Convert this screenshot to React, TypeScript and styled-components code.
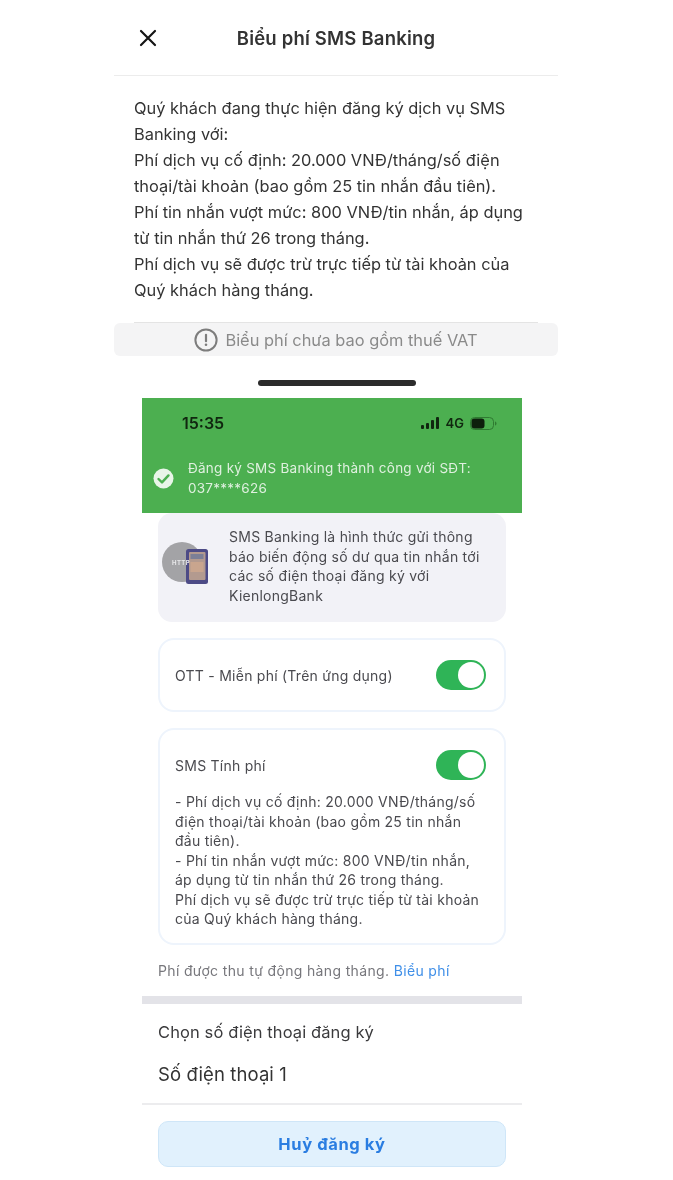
import React from "react";
import styled, { createGlobalStyle } from "styled-components";

const Global = createGlobalStyle`
  html, body { margin: 0; padding: 0; background: #fff; }
  body { font-family: Inter, "Noto Sans", "Liberation Sans", sans-serif; }
  * { box-sizing: border-box; }
`;

const Page = styled.div`
  width: 673px;
  height: 1180px;
  overflow: hidden;
  background: #fff;
  display: flex;
  flex-direction: column;
  align-items: center;
`;

const Sheet = styled.section`
  width: 444px;
  margin-left: -1px;
  filter: blur(0.3px);
`;

const SheetHeader = styled.header`
  height: 76px;
  border-bottom: 1px solid #ececec;
  display: grid;
  grid-template-columns: 66px 1fr 66px;
  align-items: center;
`;

const CloseButton = styled.span`
  display: flex;
  justify-content: flex-end;
  padding-right: 22px;
  color: #151515;
`;

const SheetTitle = styled.h1`
  margin: 0;
  text-align: center;
  font-size: 18.5px;
  letter-spacing: 0.2px;
  font-weight: 600;
  color: #333;
  white-space: nowrap;
`;

const SheetBody = styled.p`
  margin: 0;
  padding: 19px 20px 0;
  font-size: 16.4px;
  line-height: 26px;
  color: #333;
  white-space: pre-line;
`;

const Rule = styled.div`
  height: 1px;
  margin: 19px 20px 0;
  background: #e4e4e4;
`;

const Notice = styled.div`
  height: 33px;
  border-radius: 6px;
  background: #f4f4f5;
  color: #8a8a8a;
  font-size: 16.4px;
  display: flex;
  align-items: center;
  justify-content: center;
  gap: 7px;
`;

const HomeBar = styled.div`
  width: 158px;
  height: 6px;
  flex: none;
  margin-top: 24px;
  border-radius: 3px;
  background: #2b2b2b;
`;

const Phone = styled.section`
  width: 380px;
  margin-top: 12px;
  margin-right: 9px;
  flex: none;
  filter: blur(0.45px);
`;

const Banner = styled.div`
  height: 115px;
  background: #4caf50;
  padding: 15px 25px 0 11px;
`;

const StatusBar = styled.div`
  display: flex;
  align-items: center;
  justify-content: space-between;
  padding: 0 0 0 29px;
  height: 20px;
`;

const Clock = styled.span`
  font-size: 16px;
  font-weight: 600;
  color: #10260f;
`;

const StatusIcons = styled.span`
  display: flex;
  align-items: center;
  gap: 6px;
  color: #10260f;
  font-size: 13px;
  font-weight: 600;
`;

const Toast = styled.div`
  display: flex;
  align-items: center;
  gap: 14px;
  margin-top: 26px;
  color: #dff0df;
  font-size: 13.5px;
  letter-spacing: 0.25px;
  line-height: 19.5px;
`;

const Content = styled.div`
  padding: 0 16px;
`;

const InfoCard = styled.div`
  height: 109px;
  border-radius: 14px;
  background: #f2f2f7;
  padding: 14px 10px 0 4px;
  display: flex;
  gap: 20px;
  color: #4a4a4f;
  font-size: 14px;
  letter-spacing: 0.25px;
  line-height: 19.5px;
  white-space: nowrap;
`;

const InfoIcon = styled.span`
  flex: none;
  margin-top: 15px;
  display: block;
`;

const OptionCard = styled.div`
  margin-top: 16px;
  border: 2px solid #eef4fc;
  border-radius: 16px;
  padding: 0 18px 0 15px;
  background: #fff;
`;

const OptionRow = styled.div`
  height: 70px;
  display: flex;
  align-items: center;
  justify-content: space-between;
  color: #4a4a4f;
  font-size: 14px;
  letter-spacing: 0.25px;
`;

const Switch = styled.span`
  width: 50px;
  height: 30px;
  border-radius: 15px;
  padding: 2px;
  background: #2fb457;
  display: flex;
  justify-content: flex-end;

  &::after {
    content: "";
    width: 26px;
    height: 26px;
    border-radius: 50%;
    background: #fff;
  }
`;

const OptionText = styled.p`
  margin: -8px 0 0;
  padding-bottom: 14px;
  color: #4a4a4f;
  font-size: 14px;
  letter-spacing: 0.25px;
  line-height: 19.5px;
  white-space: pre-line;
`;

const FeeNote = styled.p`
  margin: 17px 0 0;
  color: #77777c;
  font-size: 14px;
  letter-spacing: 0.35px;
  line-height: 18px;
`;

const FeeLink = styled.span`
  color: #3f8fe8;
`;

const ThickDivider = styled.div`
  height: 8px;
  margin-top: 16px;
  background: #e3e3e8;
`;

const PhoneSection = styled.div`
  padding: 18px 16px 0;
`;

const FieldLabel = styled.div`
  color: #3a3a3c;
  font-size: 16.5px;
  letter-spacing: 0.1px;
  line-height: 20px;
`;

const FieldValue = styled.div`
  margin-top: 22px;
  color: #333;
  font-size: 18.5px;
  letter-spacing: 0.1px;
  line-height: 20px;
`;

const ThinDivider = styled.div`
  height: 2px;
  margin-top: 19px;
  background: #ececee;
`;

const Actions = styled.div`
  padding: 16px 16px 0;
`;

const CancelButton = styled.div`
  height: 46px;
  border: 1px solid #cfe6f8;
  border-radius: 10px;
  background: #e1f1fd;
  color: #2a7de1;
  font-size: 16.5px;
  font-weight: 700;
  letter-spacing: 0.6px;
  display: flex;
  align-items: center;
  justify-content: center;
`;

const CloseIcon = () => (
  <svg width="20" height="20" viewBox="0 0 20 20" fill="none" stroke="currentColor" strokeWidth="2.2" strokeLinecap="round">
    <path d="M3 3l14 14M17 3L3 17" />
  </svg>
);

const AlertIcon = () => (
  <svg width="24" height="24" viewBox="0 0 24 24" fill="none">
    <circle cx="12" cy="12" r="10.6" stroke="#7d7d7d" strokeWidth="2" />
    <path d="M12 6.8v6.4" stroke="#7d7d7d" strokeWidth="2.2" strokeLinecap="round" />
    <circle cx="12" cy="16.8" r="1.3" fill="#7d7d7d" />
  </svg>
);

const SignalIcons = () => (
  <svg width="19" height="12" viewBox="0 0 19 12" fill="#10260f">
    <rect x="0" y="8" width="3" height="4" rx="1" />
    <rect x="5" y="6" width="3" height="6" rx="1" />
    <rect x="10" y="3" width="3" height="9" rx="1" />
    <rect x="15" y="0" width="3" height="12" rx="1" />
  </svg>
);

const BatteryIcon = () => (
  <svg width="27" height="13" viewBox="0 0 27 13" fill="none">
    <rect x="0.5" y="0.5" width="23" height="12" rx="4" stroke="#2f7a31" />
    <rect x="1.5" y="1.5" width="13" height="10" rx="3" fill="#0d1f0c" />
    <path d="M25 4.5c1 .4 1.5 1.2 1.5 2s-.5 1.6-1.5 2z" fill="#2f7a31" />
  </svg>
);

const CheckIcon = () => (
  <svg width="21" height="21" viewBox="0 0 21 21" style={{ flex: "none" }}>
    <circle cx="10.5" cy="10.5" r="10" fill="#e8f5e8" />
    <path d="M5.5 11l3.5 3.4 6.5-7" fill="none" stroke="#4caf50" strokeWidth="2.4" strokeLinecap="round" strokeLinejoin="round" />
  </svg>
);

const HttpPhoneIcon = () => (
  <svg width="47" height="43" viewBox="0 0 47 43">
    <circle cx="20" cy="20" r="20" fill="#a3a3a6" />
    <rect x="24" y="7" width="22" height="35" rx="2.5" fill="#4d4b86" />
    <rect x="27" y="10" width="16.5" height="28" rx="1" fill="#b39a8f" />
    <rect x="28.5" y="12" width="13" height="5" fill="#7c7f96" />
    <rect x="28.5" y="20" width="13" height="10" fill="#c9a58e" />
    <text x="10" y="23" fontSize="6" fontWeight="700" letterSpacing="0.4" fill="#e8e8ea" fontFamily="Inter, sans-serif">HTTP</text>
  </svg>
);

export default function App() {
  return (
    <Page>
      <Global />
      <Sheet>
        <SheetHeader>
          <CloseButton><CloseIcon /></CloseButton>
          <SheetTitle>Biểu phí SMS Banking</SheetTitle>
          <span />
        </SheetHeader>
        <SheetBody>{`Quý khách đang thực hiện đăng ký dịch vụ SMS
Banking với:
Phí dịch vụ cố định: 20.000 VNĐ/tháng/số điện
thoại/tài khoản (bao gồm 25 tin nhắn đầu tiên).
Phí tin nhắn vượt mức: 800 VNĐ/tin nhắn, áp dụng
từ tin nhắn thứ 26 trong tháng.
Phí dịch vụ sẽ được trừ trực tiếp từ tài khoản của
Quý khách hàng tháng.`}</SheetBody>
        <Rule />
        <Notice><AlertIcon />Biểu phí chưa bao gồm thuế VAT</Notice>
      </Sheet>
      <HomeBar />
      <Phone>
        <Banner>
          <StatusBar>
            <Clock>15:35</Clock>
            <StatusIcons><SignalIcons />4G<BatteryIcon /></StatusIcons>
          </StatusBar>
          <Toast>
            <CheckIcon />
            <span>Đăng ký SMS Banking thành công với SĐT:<br />037****626</span>
          </Toast>
        </Banner>
        <Content>
          <InfoCard>
            <InfoIcon><HttpPhoneIcon /></InfoIcon>
            <span>SMS Banking là hình thức gửi thông<br />báo biến động số dư qua tin nhắn tới<br />các số điện thoại đăng ký với<br />KienlongBank</span>
          </InfoCard>
          <OptionCard>
            <OptionRow>OTT - Miễn phí (Trên ứng dụng)<Switch /></OptionRow>
          </OptionCard>
          <OptionCard>
            <OptionRow>SMS Tính phí<Switch /></OptionRow>
            <OptionText>{`- Phí dịch vụ cố định: 20.000 VNĐ/tháng/số
điện thoại/tài khoản (bao gồm 25 tin nhắn
đầu tiên).
- Phí tin nhắn vượt mức: 800 VNĐ/tin nhắn,
áp dụng từ tin nhắn thứ 26 trong tháng.
Phí dịch vụ sẽ được trừ trực tiếp từ tài khoản
của Quý khách hàng tháng.`}</OptionText>
          </OptionCard>
          <FeeNote>Phí được thu tự động hàng tháng. <FeeLink>Biểu phí</FeeLink></FeeNote>
        </Content>
        <ThickDivider />
        <PhoneSection>
          <FieldLabel>Chọn số điện thoại đăng ký</FieldLabel>
          <FieldValue>Số điện thoại 1</FieldValue>
        </PhoneSection>
        <ThinDivider />
        <Actions>
          <CancelButton>Huỷ đăng ký</CancelButton>
        </Actions>
      </Phone>
    </Page>
  );
}
